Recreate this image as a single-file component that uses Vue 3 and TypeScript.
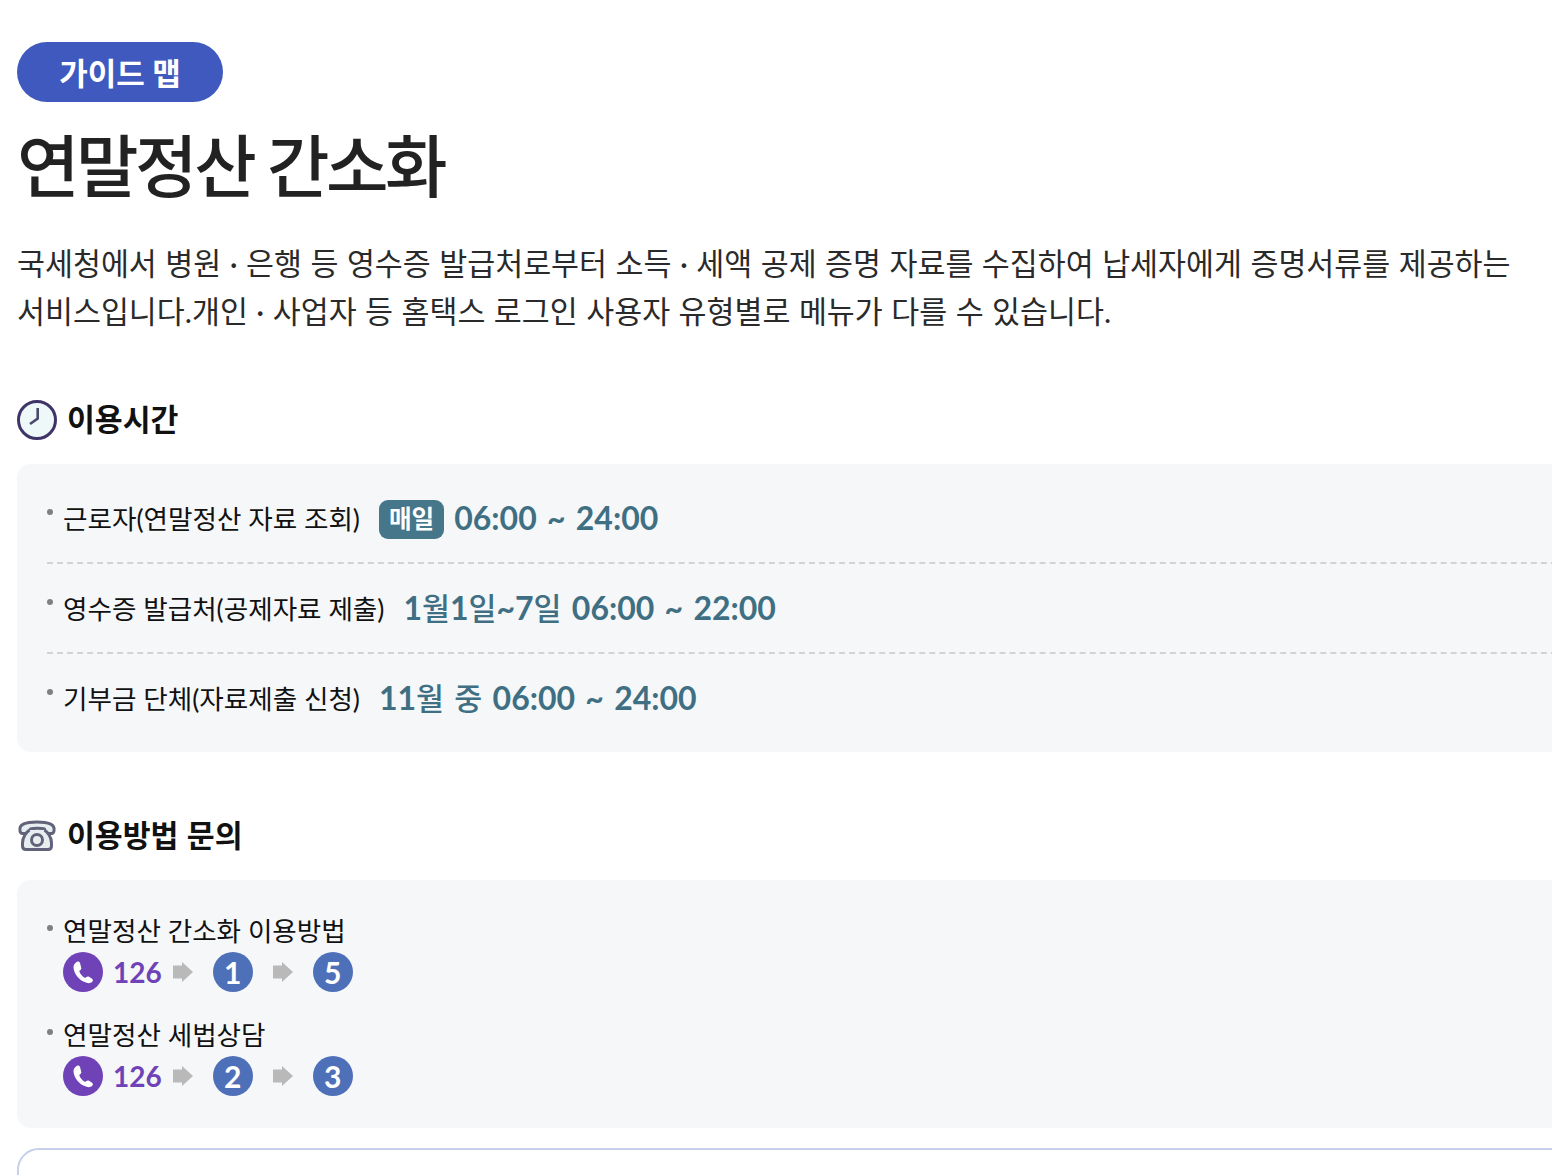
<template>
  <div class="page">
    <div class="badge">가이드 맵</div>
    <h1 class="title">연말정산 간소화</h1>
    <p class="desc">국세청에서 병원 · 은행 등 영수증 발급처로부터 소득 · 세액 공제 증명 자료를 수집하여 납세자에게 증명서류를 제공하는 서비스입니다.개인 · 사업자 등 홈택스 로그인 사용자 유형별로 메뉴가 다를 수 있습니다.</p>

    <h2 class="section-title">
      <svg class="sec-icon" width="40" height="40" viewBox="0 0 40 40">
        <circle cx="20" cy="20" r="18.500" fill="#eef8f9" stroke="#3f3468" stroke-width="3" />
        <path d="M20.700 8V18.500L13 24" fill="none" stroke="#4a4a68" stroke-width="2.600" />
      </svg>
      <span class="section-text">이용시간</span>
    </h2>
    <div class="panel">
      <div v-for="row in hours" :key="row.label" class="hour-row">
        <span class="dot"></span>
        <span class="label">{{ row.label }}</span>
        <span v-if="row.tag" class="tag">{{ row.tag }}</span>
        <span class="time">
          <span v-for="(part, i) in splitTime(row.time)" :key="i" :class="{ ko: /[가-힣]/.test(part) }">{{ part }}</span>
        </span>
      </div>
    </div>

    <h2 class="section-title second">
      <svg class="sec-icon" width="40" height="40" viewBox="0 0 40 40">
        <path d="M3 15C1.500 8 9 6 20 6s18.500 2 17 9c-.3 1.500-1 2.500-2.500 2.500h-4.500c-2 0-2.500-1-2.500-4.500-3-1-11-1-14 0 0 3.500-.5 4.500-2.500 4.500H5.500C4 17.500 3.300 16.500 3 15z" fill="#e6eef0" stroke="#62627a" stroke-width="3" stroke-linejoin="round" />
        <path d="M12.500 14c-3 2-7 7-7 13v3c0 2.500 1 3.500 3.500 3.500h22c2.500 0 3.500-1 3.500-3.500v-3c0-6-4-11-7-13" fill="#e6eef0" stroke="#62627a" stroke-width="3" />
        <circle cx="20" cy="24" r="5.500" fill="#e6eef0" stroke="#62627a" stroke-width="3" />
      </svg>
      <span class="section-text">이용방법 문의</span>
    </h2>
    <div class="panel contact">
      <div v-for="item in contacts" :key="item.label" class="contact-item">
        <div class="contact-label"><span class="dot"></span>{{ item.label }}</div>
        <div class="steps">
          <span class="phone">
            <svg width="40" height="40" viewBox="0 0 40 40">
              <path d="M13 10.500c1.500-1.500 3.500-1 4 .5l1.200 4.500c.3 1 0 2-1 2.700l-1 .8c1 3 3 5.500 6 7l1.200-1c.8-.7 1.800-.7 2.600-.2l3 2c1.200.8 1.200 2 .2 3-1.500 1.500-3.500 1.800-5.500 1C16 29 10.500 21 10.500 15c0-1.800 1-3.300 2.500-4.500z" fill="#fff" />
            </svg>
          </span>
          <span class="num">126</span>
          <template v-for="n in item.keys" :key="n">
            <svg class="arrow" width="20" height="20" viewBox="0 0 20 20">
              <path d="M0 3.500H9V0L20 10L9 20V16.500H0Z" fill="#b9b9b9" />
            </svg>
            <span class="key">{{ n }}</span>
          </template>
        </div>
      </div>
    </div>
    <div class="next-card"></div>
  </div>
</template>

<script setup lang="ts">
interface HourRow {
  label: string;
  tag?: string;
  time: string;
}

const hours: HourRow[] = [
  { label: '근로자(연말정산 자료 조회)', tag: '매일', time: '06:00 ~ 24:00' },
  { label: '영수증 발급처(공제자료 제출)', time: '1월1일~7일 06:00 ~ 22:00' },
  { label: '기부금 단체(자료제출 신청)', time: '11월 중 06:00 ~ 24:00' },
];

const contacts = [
  { label: '연말정산 간소화 이용방법', keys: [1, 5] },
  { label: '연말정산 세법상담', keys: [2, 3] },
];

// Hangul in the time strings is set a little smaller than the digits
const splitTime = (time: string) => time.split(/([가-힣]+)/).filter(Boolean);
</script>

<style>
html,
body {
  margin: 0;
  background: #fff;
  overflow: hidden;
}
</style>

<style scoped>
.page {
  width: 1552px;
  height: 1175px;
  box-sizing: border-box;
  padding: 42px 0 0 17px;
  overflow: hidden;
  font-family: "Lato", "Noto Sans CJK KR", sans-serif;
  color: #222;
}

.badge {
  width: 206px;
  height: 60px;
  border-radius: 30px;
  background: #4059bf;
  color: #fff;
  font-size: 31px;
  font-weight: 700;
  line-height: 62px;
  text-align: center;
}

.title {
  margin: 22px 0 0;
  font-size: 68px;
  font-weight: 500;
  line-height: 84px;
  letter-spacing: -3.500px;
  color: #222;
}

.desc {
  margin: 31px 0 0;
  width: 1500px;
  font-size: 30.400px;
  line-height: 48px;
  word-spacing: 0.700px;
  color: #2a2a2a;
}

.section-title {
  display: flex;
  align-items: center;
  gap: 10px;
  height: 44px;
  margin: 63px 0 0;
  font-size: 30.300px;
  font-weight: 700;
  line-height: 44px;
  word-spacing: 1px;
  color: #111;
}

.section-title.second {
  margin-top: 62px;
}

.section-text {
  margin-top: -2px;
}

.panel {
  width: 1600px;
  margin-top: 22px;
  padding: 10px 30px;
  box-sizing: border-box;
  background: #f6f7f9;
  border-radius: 14px;
}

.hour-row {
  display: flex;
  align-items: center;
  box-sizing: border-box;
  height: 90px;
  border-bottom: 2px dashed #d2d3d6;
  font-size: 26.600px;
  line-height: 40px;
}

.hour-row:last-child {
  height: 88px;
  border-bottom: 0;
}

.dot {
  flex: none;
  width: 6px;
  height: 6px;
  margin: -12px 10px 0 0;
  border-radius: 50%;
  background: #808080;
}

.label {
  margin-top: 2px;
  color: #111;
}

.tag {
  margin: 2px 0 0 19px;
  padding: 0 10px;
  height: 39px;
  line-height: 38px;
  border-radius: 9px;
  background: #457689;
  color: #fff;
  font-weight: 700;
  font-size: 24.600px;
}

.time {
  margin-left: 19px;
  font-size: 32px;
  font-weight: 700;
  color: #3f6f83;
  word-spacing: 2.500px;
}

.time .ko {
  font-size: 30.400px;
  font-weight: 500;
}

.tag + .time {
  margin-left: 10px;
}

.contact {
  padding: 28px 30px 32px;
}

.contact-item + .contact-item {
  margin-top: 20px;
}

.contact-label {
  display: flex;
  align-items: center;
  box-sizing: border-box;
  height: 44px;
  padding-bottom: 2px;
  font-size: 26.600px;
  color: #111;
}

.contact-label .dot {
  margin-top: -2px;
}

.steps {
  display: flex;
  align-items: center;
  margin-left: 16px;
  height: 40px;
}

.phone {
  width: 40px;
  height: 40px;
  border-radius: 50%;
  background: #6f42b8;
}

.phone svg {
  display: block;
}

.num {
  margin-left: 10px;
  font-size: 28px;
  font-weight: 700;
  color: #6f42b8;
}

.arrow {
  margin-left: 11px;
}

.key {
  width: 40px;
  height: 40px;
  margin-left: 20px;
  border-radius: 50%;
  background: #4e70b9;
  color: #fff;
  font-size: 30px;
  font-weight: 700;
  line-height: 40px;
  text-align: center;
}

.key + .arrow {
  margin-left: 20px;
}

.next-card {
  width: 1600px;
  height: 120px;
  margin-top: 20px;
  box-sizing: border-box;
  border: 2px solid #c5d1ea;
  border-radius: 22px;
}
</style>
